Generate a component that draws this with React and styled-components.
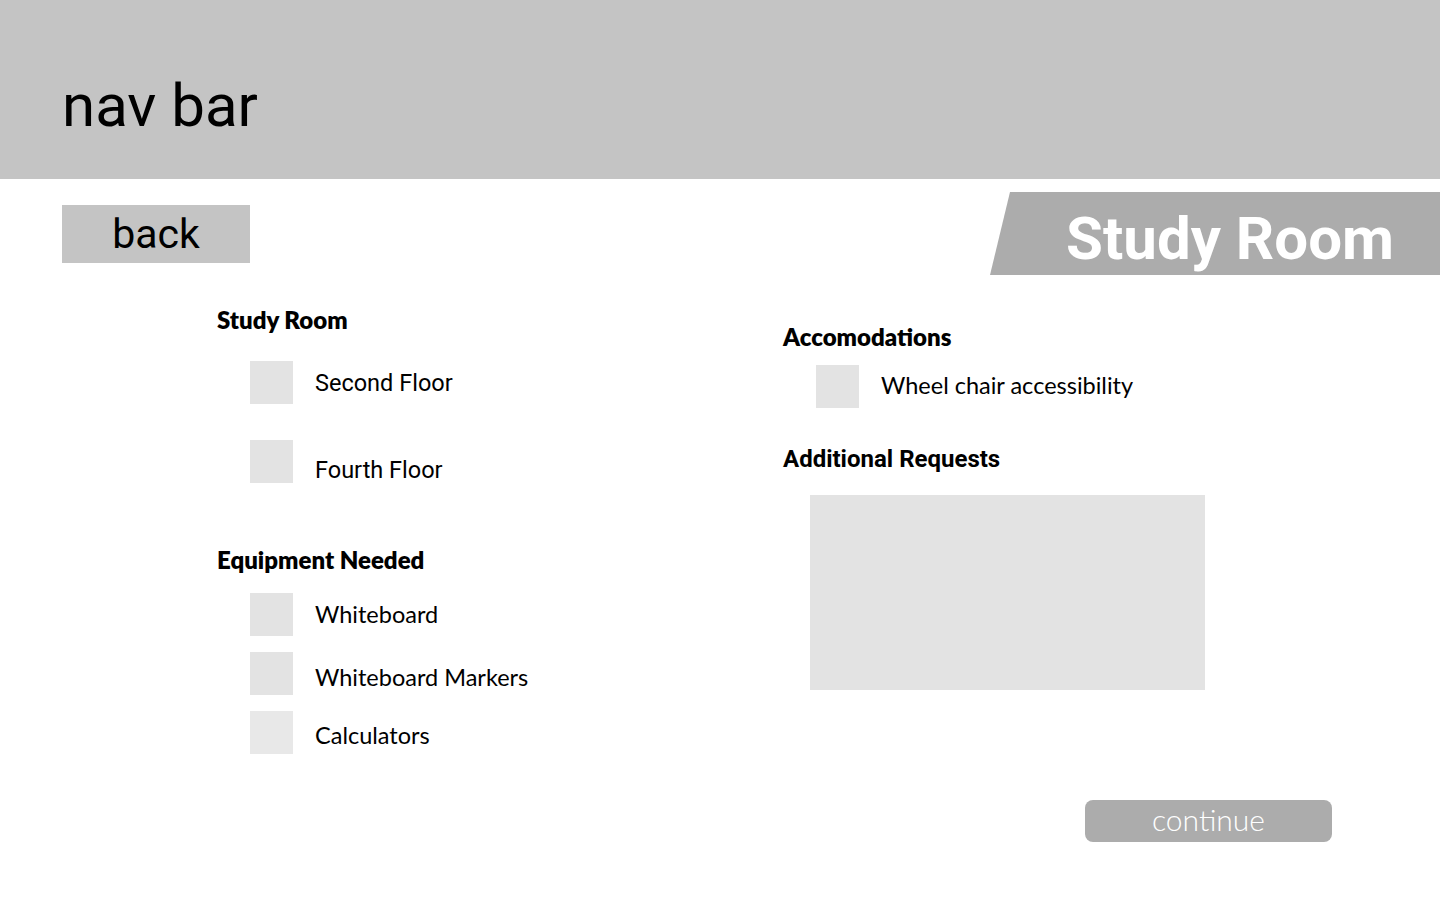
import styled, { createGlobalStyle } from "styled-components";

const GlobalStyle = createGlobalStyle`
  body {
    margin: 0;
    background: #fff;
    font-family: "Lato", "Open Sans", sans-serif;
    color: #000;
  }
`;

const App = () => {
  return (
    <Page>
      <GlobalStyle />
      <NavBar>nav bar</NavBar>

      <TopRow>
        <BackButton>back</BackButton>
        <TitleBanner>Study Room</TitleBanner>
      </TopRow>

      <Columns>
        <LeftColumn>
          <Heading>Study Room</Heading>
          <Options top="28px" gap="36px">
            <Option>
              <Box />
              <Label roboto>Second Floor</Label>
            </Option>
            <Option>
              <Box />
              <Label roboto offset="8px">Fourth Floor</Label>
            </Option>
          </Options>

          <Heading space="64px">Equipment Needed</Heading>
          <Options top="20px" gap="16px">
            <Option>
              <Box />
              <Label offset="-1px">Whiteboard</Label>
            </Option>
            <Option>
              <Box />
              <Label offset="3px">Whiteboard Markers</Label>
            </Option>
            <Option>
              <Box light />
              <Label offset="2px">Calculators</Label>
            </Option>
          </Options>
        </LeftColumn>

        <RightColumn>
          <Heading space="49px">Accomodations</Heading>
          <Options top="15px" indent="33px">
            <Option>
              <Box />
              <Label offset="-2px">Wheel chair accessibility</Label>
            </Option>
          </Options>

          <Heading space="38px" roboto>Additional Requests</Heading>
          <RequestBox />
        </RightColumn>
      </Columns>

      <Footer>
        <ContinueButton>continue</ContinueButton>
      </Footer>
    </Page>
  );
};

export default App;

const Page = styled.div`
  width: 1440px;
  min-height: 900px;
`;

const NavBar = styled.header`
  height: 179px;
  background: #c4c4c4;
  display: flex;
  align-items: flex-start;
  padding: 71px 0 0 62px;
  box-sizing: border-box;
  font-family: "Roboto", sans-serif;
  font-size: 60px;
  line-height: 70px;
  color: #000;
`;

const TopRow = styled.div`
  display: flex;
  justify-content: space-between;
  align-items: flex-start;
  padding-left: 62px;
  height: 96px;
`;

const BackButton = styled.button`
  margin-top: 26px;
  width: 188px;
  height: 58px;
  border: none;
  padding: 0;
  background: #c4c4c4;
  font-family: "Roboto", sans-serif;
  font-size: 41px;
  line-height: 58px;
  color: #000;
  text-align: center;
  cursor: pointer;
`;

const TitleBanner = styled.h1`
  margin: 13px 0 0;
  width: 450px;
  height: 83px;
  box-sizing: border-box;
  padding: 10px 46px 0 0;
  background: #acacac;
  clip-path: polygon(20px 0, 100% 0, 100% 100%, 0 100%);
  display: flex;
  align-items: center;
  justify-content: flex-end;
  font-family: "Roboto", sans-serif;
  font-weight: 700;
  font-size: 60px;
  line-height: 70px;
  color: #fff;
`;

const Columns = styled.div`
  display: grid;
  grid-template-columns: 566px 1fr;
  padding-left: 217px;
`;

const LeftColumn = styled.div`
  display: flex;
  flex-direction: column;
  padding-top: 32px;
`;

const RightColumn = styled.div`
  display: flex;
  flex-direction: column;
`;

const Heading = styled.h2`
  margin: ${(p) => p.space || "0"} 0 0;
  font-family: ${(p) => (p.roboto ? `"Roboto"` : `"Lato"`)}, sans-serif;
  font-weight: ${(p) => (p.roboto ? 700 : 800)};
  font-size: 24px;
  line-height: 26px;
  color: #000;
`;

const Options = styled.div`
  display: flex;
  flex-direction: column;
  gap: ${(p) => p.gap || "16px"};
  margin-top: ${(p) => p.top || "0"};
  padding-left: ${(p) => p.indent || "33px"};
`;

const Option = styled.div`
  display: flex;
  align-items: center;
  gap: 22px;
  height: 43px;
`;

const Label = styled.span`
  position: relative;
  top: ${(p) => p.offset || "0"};
  font-family: ${(p) => (p.roboto ? `"Roboto"` : `"Lato"`)}, sans-serif;
  font-size: 23.5px;
  color: #000;
`;

const Box = styled.span`
  width: 43px;
  height: 43px;
  flex: none;
  background: ${(p) => (p.light ? "#e8e8e8" : "#e3e3e3")};
`;

const RequestBox = styled.div`
  margin: 23px 0 0 27px;
  width: 395px;
  height: 195px;
  background: #e3e3e3;
`;

const Footer = styled.div`
  display: flex;
  justify-content: flex-end;
  padding: 46px 108px 0 0;
`;

const ContinueButton = styled.button`
  width: 247px;
  height: 42px;
  border: none;
  border-radius: 8px;
  background: #acacac;
  color: #fff;
  font-family: "Lato", sans-serif;
  font-weight: 300;
  font-size: 30px;
  line-height: 36px;
  padding: 0 0 4px;
  cursor: pointer;
`;
